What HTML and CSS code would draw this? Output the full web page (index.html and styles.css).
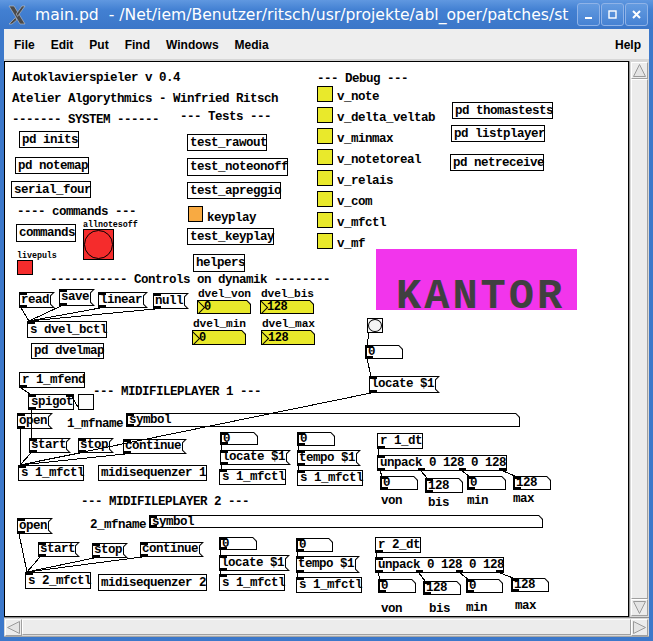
FILE: index.html
```html
<!DOCTYPE html>
<html>
<head>
<meta charset="utf-8">
<title>main.pd</title>
<link rel="stylesheet" href="styles.css">
</head>
<body>
<div class="win">
  <header class="titlebar">
    <svg class="xlogo" viewBox="0 0 18 20" width="18" height="20">
      <polygon points="1,1 6,1 17,19 12,19" fill="#4a4a4a" stroke="#bfc6d0" stroke-width="0.6"/>
      <polygon points="14,1 17,1 9.6,11.4 8.2,9" fill="#4a4a4a" stroke="#bfc6d0" stroke-width="0.6"/>
      <polygon points="7.4,12.6 8.8,15 4,19 1,19" fill="#4a4a4a" stroke="#bfc6d0" stroke-width="0.6"/>
    </svg>
    <div class="title">main.pd  - /Net/iem/Benutzer/ritsch/usr/projekte/abl_oper/patches/st</div>
    <div class="btns">
      <span class="wbtn"><svg width="13" height="13" viewBox="0 0 13 13"><rect x="3" y="9" width="7" height="2" fill="#fff"/></svg></span>
      <span class="wbtn"><svg width="13" height="13" viewBox="0 0 13 13"><rect x="3" y="3" width="7" height="7" fill="none" stroke="#fff" stroke-width="1.4"/></svg></span>
      <span class="wbtn"><svg width="13" height="13" viewBox="0 0 13 13"><path d="M3 3 L10 10 M10 3 L3 10" stroke="#fff" stroke-width="2"/></svg></span>
    </div>
  </header>
  <div class="client">
    <nav class="menubar">
      <span>File</span><span>Edit</span><span>Put</span><span>Find</span><span>Windows</span><span>Media</span><span class="help">Help</span>
    </nav>
    <div class="mid">
      <div class="canvas">
        <!-- comments -->
        <div class="c" style="left:7px;top:7px">Autoklavierspieler v 0.4</div>
        <div class="c" style="left:7px;top:28px">Atelier Algorythmics - Winfried Ritsch</div>
        <div class="c" style="left:7px;top:49px">------- SYSTEM ------</div>
        <div class="c" style="left:175px;top:46px">--- Tests ---</div>
        <div class="c" style="left:312px;top:8px">--- Debug ---</div>
        <div class="c" style="left:12px;top:141px">---- commands ---</div>
        <div class="cs" style="left:78px;top:156px">allnotesoff</div>
        <div class="cs" style="left:12px;top:187px">livepuls</div>
        <div class="c" style="left:202px;top:147px">keyplay</div>
        <div class="c" style="left:332px;top:26px">v_note</div>
        <div class="c" style="left:332px;top:47px">v_delta_veltab</div>
        <div class="c" style="left:332px;top:68px">v_minmax</div>
        <div class="c" style="left:332px;top:89px">v_notetoreal</div>
        <div class="c" style="left:332px;top:110px">v_relais</div>
        <div class="c" style="left:332px;top:131px">v_com</div>
        <div class="c" style="left:332px;top:152px">v_mfctl</div>
        <div class="c" style="left:332px;top:173px">v_mf</div>
        <div class="c" style="left:45px;top:209px">----------- Controls on dynamik --------</div>
        <div class="c l" style="left:193px;top:222.8px">dvel_von</div>
        <div class="c l" style="left:256px;top:222.8px">dvel_bis</div>
        <div class="c l" style="left:188px;top:253px">dvel_min</div>
        <div class="c l" style="left:257px;top:253px">dvel_max</div>
        <div class="c" style="left:88px;top:321px">--- MIDIFILEPLAYER 1 ---</div>
        <div class="c" style="left:62px;top:353px">1_mfname</div>
        <div class="c" style="left:76px;top:431px">--- MIDIFILEPLAYER 2 ---</div>
        <div class="c" style="left:85px;top:454px">2_mfname</div>
        <div class="c" style="left:376px;top:430px">von</div>
        <div class="c" style="left:423px;top:432px">bis</div>
        <div class="c" style="left:462px;top:430px">min</div>
        <div class="c" style="left:508px;top:428px">max</div>
        <div class="c" style="left:376px;top:538px">von</div>
        <div class="c" style="left:424px;top:538px">bis</div>
        <div class="c" style="left:461px;top:537px">min</div>
        <div class="c" style="left:510px;top:535px">max</div>

        <!-- object boxes -->
        <div class="o" style="left:14px;top:69px;width:60px;height:17px">pd inits</div>
        <div class="o" style="left:10px;top:95px;width:74px;height:17px">pd notemap</div>
        <div class="o" style="left:6px;top:119px;width:80px;height:17px">serial_four</div>
        <div class="o" style="left:11px;top:162px;width:60px;height:18px">commands</div>
        <div class="o" style="left:182px;top:72px;width:80px;height:17px">test_rawout</div>
        <div class="o" style="left:182px;top:96px;width:101px;height:18px">test_noteonoff</div>
        <div class="o" style="left:182px;top:120px;width:94px;height:17px">test_apreggio</div>
        <div class="o" style="left:182px;top:166px;width:87px;height:17px">test_keyplay</div>
        <div class="o" style="left:188px;top:192px;width:52px;height:18px">helpers</div>
        <div class="o" style="left:447px;top:40px;width:101px;height:17px">pd thomastests</div>
        <div class="o" style="left:446px;top:63px;width:94px;height:17px">pd listplayer</div>
        <div class="o" style="left:445px;top:92px;width:94px;height:17px">pd netreceive</div>
        <div class="o i" style="left:22px;top:259px;width:80px;height:17px">s dvel_bctl</div>
        <div class="o" style="left:26px;top:281px;width:73px;height:16px">pd dvelmap</div>
        <div class="o x" style="left:14px;top:310px;width:66px;height:16px">r 1_mfend</div>
        <div class="o spig" style="left:23px;top:332px;width:46px;height:16px">spigot</div>
        <div class="o i" style="left:13px;top:403px;width:66px;height:16px">s 1_mfctl</div>
        <div class="o" style="left:93px;top:403px;width:109px;height:16px">midisequenzer 1</div>
        <div class="o i" style="left:214px;top:407px;width:67px;height:16px">s 1_mfctl</div>
        <div class="o i" style="left:292px;top:408px;width:66px;height:16px">s 1_mfctl</div>
        <div class="o x" style="left:372px;top:371px;width:46px;height:16px">r 1_dt</div>
        <div class="o unp" style="left:372px;top:393px;width:130px;height:16px">unpack 0 128 0 128</div>
        <div class="o i" style="left:20px;top:510px;width:66px;height:17px">s 2_mfctl</div>
        <div class="o" style="left:93px;top:512px;width:109px;height:17px">midisequenzer 2</div>
        <div class="o i" style="left:214px;top:512px;width:66px;height:17px">s 1_mfctl</div>
        <div class="o i" style="left:291px;top:515px;width:66px;height:16px">s 1_mfctl</div>
        <div class="o x" style="left:370px;top:475px;width:46px;height:16px">r 2_dt</div>
        <div class="o unp" style="left:370px;top:495px;width:129px;height:16px">unpack 0 128 0 128</div>

        <!-- message boxes -->
        <div class="m" style="left:14px;top:230px;width:36px;height:16px">read</div>
        <div class="m" style="left:54px;top:227px;width:36px;height:17px">save</div>
        <div class="m" style="left:93px;top:230px;width:50px;height:16px">linear</div>
        <div class="m" style="left:148px;top:231px;width:36px;height:16px">null</div>
        <div class="m" style="left:364px;top:314px;width:71px;height:17px">locate $1</div>
        <div class="m" style="left:12px;top:351px;width:36px;height:16px">open</div>
        <div class="m" style="left:24px;top:376px;width:42px;height:15px">start</div>
        <div class="m" style="left:73px;top:376px;width:36px;height:15px">stop</div>
        <div class="m" style="left:118px;top:377px;width:64px;height:15px">continue</div>
        <div class="m" style="left:215px;top:388px;width:71px;height:15px">locate $1</div>
        <div class="m" style="left:292px;top:388px;width:64px;height:16px">tempo $1</div>
        <div class="m" style="left:12px;top:456px;width:36px;height:16px">open</div>
        <div class="m" style="left:33px;top:480px;width:42px;height:15px">start</div>
        <div class="m" style="left:87px;top:481px;width:36px;height:15px">stop</div>
        <div class="m" style="left:135px;top:480px;width:64px;height:15px">continue</div>
        <div class="m" style="left:214px;top:493px;width:71px;height:16px">locate $1</div>
        <div class="m" style="left:291px;top:494px;width:64px;height:17px">tempo $1</div>

        <!-- atom boxes -->
        <div class="a" style="left:360px;top:283px;width:38px;height:14px">0</div>
        <div class="a" style="left:215px;top:370px;width:38px;height:13px">0</div>
        <div class="a" style="left:292px;top:370px;width:38px;height:14px">0</div>
        <div class="a" style="left:375px;top:414px;width:38px;height:14px">0</div>
        <div class="a" style="left:420px;top:416px;width:38px;height:15px">128</div>
        <div class="a" style="left:462px;top:414px;width:39px;height:14px">0</div>
        <div class="a" style="left:508px;top:414px;width:38px;height:14px">128</div>
        <div class="a" style="left:214px;top:475px;width:38px;height:13px">0</div>
        <div class="a" style="left:291px;top:476px;width:37px;height:14px">0</div>
        <div class="a" style="left:373px;top:517px;width:38px;height:14px">0</div>
        <div class="a" style="left:418px;top:519px;width:38px;height:14px">128</div>
        <div class="a" style="left:461px;top:517px;width:37px;height:14px">0</div>
        <div class="a" style="left:506px;top:516px;width:38px;height:14px">128</div>
        <div class="a" style="left:121px;top:351px;width:394px;height:14px">symbol</div>
        <div class="a" style="left:144px;top:453px;width:394px;height:13px">symbol</div>

        <!-- IEM number boxes -->
        <div class="n" style="left:192px;top:238px;width:54px;height:14px">0</div>
        <div class="n" style="left:255px;top:238px;width:54px;height:14px">128</div>
        <div class="n" style="left:187px;top:268px;width:54px;height:15px">0</div>
        <div class="n" style="left:256px;top:268px;width:54px;height:15px">128</div>

        <!-- toggles -->
        <div class="t yel" style="left:312px;top:24px"></div>
        <div class="t yel" style="left:312px;top:45px"></div>
        <div class="t yel" style="left:312px;top:66px"></div>
        <div class="t yel" style="left:312px;top:87px"></div>
        <div class="t yel" style="left:312px;top:108px"></div>
        <div class="t yel" style="left:312px;top:129px"></div>
        <div class="t yel" style="left:312px;top:150px"></div>
        <div class="t yel" style="left:312px;top:171px"></div>
        <div class="t org" style="left:183px;top:144px"></div>
        <div class="t red" style="left:12px;top:198px"></div>
        <div class="t wht" style="left:73px;top:332px"></div>

        <!-- bangs -->
        <div class="b big" style="left:78px;top:167px"></div>
        <div class="b small" style="left:362px;top:256px"></div>

        <!-- canvas -->
        <div class="cnv" style="left:371px;top:187px"><span class="kantor">KANTOR</span></div>

        <svg class="wires" viewBox="5 62 623 554" width="623" height="554">
          <g stroke="#000" stroke-width="1" fill="none">
            <line x1="21" y1="308" x2="29" y2="321"/>
            <line x1="61" y1="306" x2="29" y2="321"/>
            <line x1="100" y1="308" x2="29" y2="321"/>
            <line x1="155" y1="309" x2="29" y2="321"/>
            <line x1="369" y1="333" x2="367" y2="345"/>
            <line x1="367" y1="359" x2="371" y2="376"/>
            <line x1="371" y1="393" x2="20" y2="465"/>
            <line x1="21" y1="388" x2="30" y2="394"/>
            <line x1="31.5" y1="410" x2="31.5" y2="438"/>
            <line x1="79" y1="409" x2="71" y2="395"/>
            <line x1="20.5" y1="429" x2="20.5" y2="465"/>
            <line x1="31" y1="453" x2="20" y2="465"/>
            <line x1="80" y1="453" x2="20" y2="465"/>
            <line x1="125" y1="454" x2="20" y2="465"/>
            <line x1="221.5" y1="445" x2="221.5" y2="450"/>
            <line x1="221.5" y1="465" x2="221.5" y2="469"/>
            <line x1="298.5" y1="446" x2="298.5" y2="450"/>
            <line x1="298.5" y1="466" x2="298.5" y2="470"/>
            <line x1="378.5" y1="449" x2="378.5" y2="455"/>
            <line x1="380" y1="471" x2="382" y2="476"/>
            <line x1="421" y1="471" x2="427" y2="478"/>
            <line x1="462" y1="471" x2="469" y2="476"/>
            <line x1="503" y1="471" x2="515" y2="476"/>
            <line x1="19" y1="534" x2="27" y2="572"/>
            <line x1="40" y1="557" x2="27" y2="572"/>
            <line x1="94" y1="558" x2="27" y2="572"/>
            <line x1="142" y1="557" x2="27" y2="572"/>
            <line x1="220.5" y1="550" x2="220.5" y2="555"/>
            <line x1="220.5" y1="571" x2="220.5" y2="574"/>
            <line x1="297.5" y1="552" x2="297.5" y2="556"/>
            <line x1="297.5" y1="573" x2="297.5" y2="577"/>
            <line x1="376.5" y1="553" x2="376.5" y2="557"/>
            <line x1="378" y1="573" x2="380" y2="579"/>
            <line x1="419" y1="573" x2="425" y2="581"/>
            <line x1="460" y1="573" x2="468" y2="579"/>
            <line x1="500" y1="573" x2="513" y2="578"/>
          </g>
        </svg>
      </div>
      <div class="vscroll">
        <div class="arr"><svg width="15" height="15" viewBox="0 0 15 15"><polygon points="1.5,13.5 7.5,1.5 13.5,13.5" fill="#e4e4e4" stroke="#9a9a9a"/></svg></div>
        <div class="vthumb"></div>
        <div class="arr"><svg width="15" height="15" viewBox="0 0 15 15"><polygon points="1.5,1.5 13.5,1.5 7.5,13.5" fill="#e4e4e4" stroke="#9a9a9a"/></svg></div>
      </div>
    </div>
    <div class="hscroll">
      <div class="arr"><svg width="15" height="15" viewBox="0 0 15 15"><polygon points="13.5,1.5 13.5,13.5 1.5,7.5" fill="#e4e4e4" stroke="#9a9a9a"/></svg></div>
      <div class="hthumb"></div>
      <div class="arr"><svg width="15" height="15" viewBox="0 0 15 15"><polygon points="1.5,1.5 13.5,7.5 1.5,13.5" fill="#e4e4e4" stroke="#9a9a9a"/></svg></div>
    </div>
  </div>
</div>
</body>
</html>
```

FILE: styles.css
```css
* { box-sizing: border-box; }
html, body { margin: 0; padding: 0; }
body {
  width: 653px;
  height: 641px;
  overflow: hidden;
  background: #3c78ca;
  font-family: "DejaVu Sans", sans-serif;
}
.win {
  display: flex;
  flex-direction: column;
  height: 641px;
}

/* title bar */
.titlebar {
  height: 29px;
  flex: none;
  display: flex;
  align-items: center;
  padding: 0 5px 0 8px;
  background: linear-gradient(#6098e0 0, #4280d2 35%, #3b76c8 100%);
  color: #fff;
}
.xlogo { flex: none; display: block; }
.title {
  flex: 1;
  min-width: 0;
  margin: 0 5px 0 9px;
  font-size: 15.6px;
  white-space: pre;
  line-height: 20px;
}
.btns { display: flex; gap: 1px; flex: none; }
.wbtn {
  width: 23px;
  height: 23px;
  border: 1px solid #8fb3e8;
  border-radius: 3px;
  background: linear-gradient(#649be0, #4682d3);
  display: flex;
  align-items: center;
  justify-content: center;
}

/* client area */
.client {
  flex: 1;
  margin: 0 4px 4px;
  display: flex;
  flex-direction: column;
  background: #ececec;
}
.menubar {
  height: 32px;
  flex: none;
  display: flex;
  padding: 1px 0 1px 2px;
  font: bold 12px "Liberation Sans", Arial, sans-serif;
  line-height: 30px;
  color: #000;
  background: #eeeeee;
  border-bottom: 2px solid #d6d6d6;
}
.menubar span { padding: 0 8px; }
.menubar .help { margin-left: auto; }

.mid { height: 556px; flex: none; display: flex; }

.canvas {
  flex: 1;
  position: relative;
  overflow: hidden;
  border: 1px solid #000;
  background: #fff;
  font: bold 12.5px "Liberation Mono", "Courier New", monospace;
  letter-spacing: -0.5px;
  color: #000;
}

/* scrollbars */
.vscroll {
  width: 20px;
  flex: none;
  display: flex;
  flex-direction: column;
  background: #d8d8d8;
  border-left: 1px solid #8e8e8e;
  padding: 1px;
}
.hscroll {
  height: 20px;
  flex: none;
  display: flex;
  background: #d8d8d8;
  border-top: 1px solid #8e8e8e;
  border-bottom: 1px solid #a8a8a8;
  padding: 1px;
}
.arr {
  flex: none;
  width: 17px;
  height: 17px;
  display: flex;
  align-items: center;
  justify-content: center;
  background: #ececec;
  border: 1px solid #fff;
  border-right-color: #a0a0a0;
  border-bottom-color: #a0a0a0;
}
.vthumb, .hthumb {
  flex: 1;
  background: #ececec;
  border: 1px solid #fff;
  border-right-color: #a0a0a0;
  border-bottom-color: #a0a0a0;
}

/* pd patch elements */
.c, .cs { position: absolute; white-space: pre; }
.c { line-height: 12px; margin-top: 3px; }
.c.l {
  font-size: 11.2px;
  letter-spacing: -0.1px;
  line-height: 10px;
  margin-top: 4px;
}
.cs {
  font-size: 8.4px;
  letter-spacing: -0.05px;
  line-height: 10px;
  margin-top: 2px;
}

.o {
  position: absolute;
  display: flex;
  align-items: center;
  border: 1px solid #000;
  background: #fff;
  padding-left: 2px;
  white-space: pre;
  line-height: 14px;
}
.o.i { background: linear-gradient(#000 0 0) left top / 7px 2px no-repeat, #fff; }
.o.x { background: linear-gradient(#000 0 0) left bottom / 7px 2px no-repeat, #fff; }
.o.spig {
  background:
    linear-gradient(#000 0 0) left top / 7px 2px no-repeat,
    linear-gradient(#000 0 0) right top / 7px 2px no-repeat,
    linear-gradient(#000 0 0) left bottom / 7px 2px no-repeat,
    #fff;
}
.o.unp {
  background:
    linear-gradient(#000 0 0) left top / 7px 2px no-repeat,
    linear-gradient(#000 0 0) 0% 100% / 7px 2px no-repeat,
    linear-gradient(#000 0 0) 33.3% 100% / 7px 2px no-repeat,
    linear-gradient(#000 0 0) 66.7% 100% / 7px 2px no-repeat,
    linear-gradient(#000 0 0) 100% 100% / 7px 2px no-repeat,
    #fff;
}

/* message box: outline is the black shape, fill inset 1px */
.m {
  position: absolute;
  display: flex;
  align-items: center;
  isolation: isolate;
  background: #000;
  padding-left: 2px;
  white-space: pre;
  line-height: 13px;
  clip-path: polygon(0 0, 100% 0, calc(100% - 4px) 4px, calc(100% - 4px) calc(100% - 4px), 100% 100%, 0 100%);
}
.m::before {
  content: "";
  position: absolute;
  inset: 1px;
  z-index: -1;
  background:
    linear-gradient(#000 0 0) left top / 7px 2px no-repeat,
    linear-gradient(#000 0 0) left bottom / 7px 2px no-repeat,
    #fff;
  clip-path: polygon(0 0, calc(100% - 1.4px) 0, calc(100% - 4px) 2.6px, calc(100% - 4px) calc(100% - 2.6px), calc(100% - 1.4px) 100%, 0 100%);
}

/* atom box: top right corner cut */
.a {
  position: absolute;
  display: flex;
  align-items: center;
  isolation: isolate;
  background: #000;
  padding-left: 3px;
  white-space: pre;
  line-height: 12px;
  clip-path: polygon(0 0, calc(100% - 4px) 0, 100% 4px, 100% 100%, 0 100%);
}
.a::before {
  content: "";
  position: absolute;
  inset: 1px;
  z-index: -1;
  background:
    linear-gradient(#000 0 0) left top / 7px 2px no-repeat,
    linear-gradient(#000 0 0) left bottom / 7px 2px no-repeat,
    linear-gradient(#000 0 0) left top / 1px 100% no-repeat,
    #fff;
  clip-path: polygon(0 0, calc(100% - 3.4px) 0, 100% 3.4px, 100% 100%, 0 100%);
}

/* IEM number box */
.n {
  position: absolute;
  display: flex;
  align-items: center;
  isolation: isolate;
  background: #000;
  padding-left: 7px;
  white-space: pre;
  line-height: 12px;
  font-size: 12px;
  clip-path: polygon(0 0, calc(100% - 4px) 0, 100% 4px, 100% 100%, 0 100%);
}
.n::before {
  content: "";
  position: absolute;
  inset: 1px;
  z-index: -1;
  background: #e9e92b;
  clip-path: polygon(0 0, calc(100% - 3.4px) 0, 100% 3.4px, 100% 100%, 0 100%);
}
.n::after {
  content: "";
  position: absolute;
  left: -4.9px;
  top: calc(50% - 4.9px);
  width: 9.8px;
  height: 9.8px;
  border-top: 1px solid #000;
  border-right: 1px solid #000;
  transform: rotate(45deg);
}

/* toggles */
.t {
  position: absolute;
  width: 16px;
  height: 16px;
  border: 1px solid #000;
}
.t.yel { background: #e9e92b; }
.t.org { width: 15px; background: #f8aa42; }
.t.red { height: 15px; background: #f52c2c; }
.t.wht { background: #fcfcfc; }

/* bangs */
.b {
  position: absolute;
  border: 1px solid #000;
}
.b::after {
  content: "";
  position: absolute;
  inset: 0;
  border: 1px solid #000;
  border-radius: 50%;
}
.b.big { width: 31px; height: 31px; background: #f52c2c; }
.b.small { width: 16px; height: 15px; background: #fcfcfc; }
.b.small::after { background: #f4f4f4; }

/* IEM canvas */
.cnv {
  position: absolute;
  width: 201px;
  height: 61px;
  background: #f235ec;
}
.kantor {
  position: absolute;
  left: 20px;
  top: 27px;
  font-size: 42px;
  line-height: 42px;
  letter-spacing: 3px;
  color: #404040;
}

.wires {
  position: absolute;
  left: 0;
  top: 0;
  z-index: 5;
  pointer-events: none;
  shape-rendering: crispEdges;
}
```
